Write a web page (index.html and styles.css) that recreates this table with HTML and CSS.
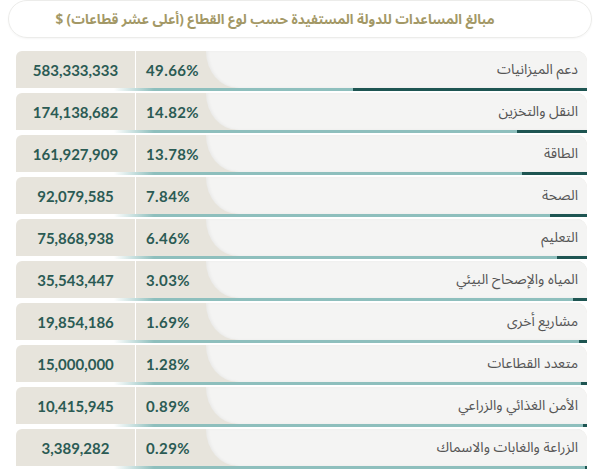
FILE: index.html
```html
<!DOCTYPE html>
<html lang="ar">
<head>
<meta charset="utf-8">
<link rel="stylesheet" href="styles.css">
</head>
<body>
<div class="title"><span dir="rtl">مبالغ المساعدات للدولة المستفيدة حسب لوع القطاع (أعلى عشر قطاعات) $</span></div>
<div class="list">
  <div class="row"><div class="cells"><div class="num">583,333,333</div><div class="pct">49.66%</div><div class="label" dir="rtl">دعم الميزانيات</div></div><div class="track"><div class="fill" style="width:234px"></div></div></div>
  <div class="row"><div class="cells"><div class="num">174,138,682</div><div class="pct">14.82%</div><div class="label" dir="rtl">النقل والتخزين</div></div><div class="track"><div class="fill" style="width:70px"></div></div></div>
  <div class="row"><div class="cells"><div class="num">161,927,909</div><div class="pct">13.78%</div><div class="label" dir="rtl">الطاقة</div></div><div class="track"><div class="fill" style="width:65px"></div></div></div>
  <div class="row"><div class="cells"><div class="num">92,079,585</div><div class="pct">7.84%</div><div class="label" dir="rtl">الصحة</div></div><div class="track"><div class="fill" style="width:37px"></div></div></div>
  <div class="row"><div class="cells"><div class="num">75,868,938</div><div class="pct">6.46%</div><div class="label" dir="rtl">التعليم</div></div><div class="track"><div class="fill" style="width:30px"></div></div></div>
  <div class="row"><div class="cells"><div class="num">35,543,447</div><div class="pct">3.03%</div><div class="label" dir="rtl">المياه والإصحاح البيئي</div></div><div class="track"><div class="fill" style="width:14px"></div></div></div>
  <div class="row"><div class="cells"><div class="num">19,854,186</div><div class="pct">1.69%</div><div class="label" dir="rtl">مشاريع أخرى</div></div><div class="track"><div class="fill" style="width:8px"></div></div></div>
  <div class="row"><div class="cells"><div class="num">15,000,000</div><div class="pct">1.28%</div><div class="label" dir="rtl">متعدد القطاعات</div></div><div class="track"><div class="fill" style="width:6px"></div></div></div>
  <div class="row"><div class="cells"><div class="num">10,415,945</div><div class="pct">0.89%</div><div class="label" dir="rtl">الأمن الغذائي والزراعي</div></div><div class="track"><div class="fill" style="width:4px"></div></div></div>
  <div class="row"><div class="cells"><div class="num">3,389,282</div><div class="pct">0.29%</div><div class="label" dir="rtl">الزراعة والغابات والاسماك</div></div><div class="track"><div class="fill" style="width:2px"></div></div></div>
</div>
</body>
</html>
```

FILE: styles.css
```css
html, body {
  margin: 0;
  padding: 0;
  background: #ffffff;
}
body {
  width: 600px;
  height: 470px;
  overflow: hidden;
  font-family: "Lato", "Noto Sans", sans-serif;
}
.title {
  margin: 0 8px;
  height: 36px;
  border: 1px solid #ececea;
  border-radius: 19px;
  box-shadow: 0 1px 2px rgba(0,0,0,0.04);
  display: flex;
  align-items: center;
  justify-content: center;
  padding-right: 50px;
  font-family: "Noto Sans Arabic", "DejaVu Sans", sans-serif;
  font-weight: bold;
  font-size: 13.5px;
  color: #a39866;
}
.list {
  margin-top: 13px;
  padding: 0 13px 0 16px;
  display: flex;
  flex-direction: column;
  gap: 2px;
}
.row {
  display: flex;
  flex-direction: column;
}
.cells {
  height: 37px;
  display: flex;
  background: #e7e4dc;
  border-radius: 6px 10px 0 0;
}
.num {
  width: 119px;
  border-right: 1px solid #ffffff;
  display: flex;
  align-items: center;
  justify-content: center;
  font-weight: bold;
  font-size: 15px;
  color: #2b5b54;
}
.pct {
  width: 60px;
  padding-left: 10px;
  display: flex;
  align-items: center;
  font-weight: bold;
  font-size: 15px;
  letter-spacing: 0.4px;
  color: #2b5b54;
}
.label {
  flex: 1;
  background: #f4f4f3;
  border-radius: 0 10px 0 0;
  border-bottom-left-radius: 32px 37px;
  display: flex;
  align-items: center;
  padding-right: 9px;
  font-family: "Noto Sans Arabic", "DejaVu Sans", sans-serif;
  font-size: 14px;
  color: #555555;
  box-shadow: inset 2px 0 3px rgba(0,0,0,0.04);
}
.track {
  height: 3px;
  margin-left: 98px;
  background: linear-gradient(to right, rgba(142,191,189,0) 0, #8ebfbd 40px);
  display: flex;
  justify-content: flex-end;
}
.fill {
  height: 3px;
  background: #1e5552;
}
```
